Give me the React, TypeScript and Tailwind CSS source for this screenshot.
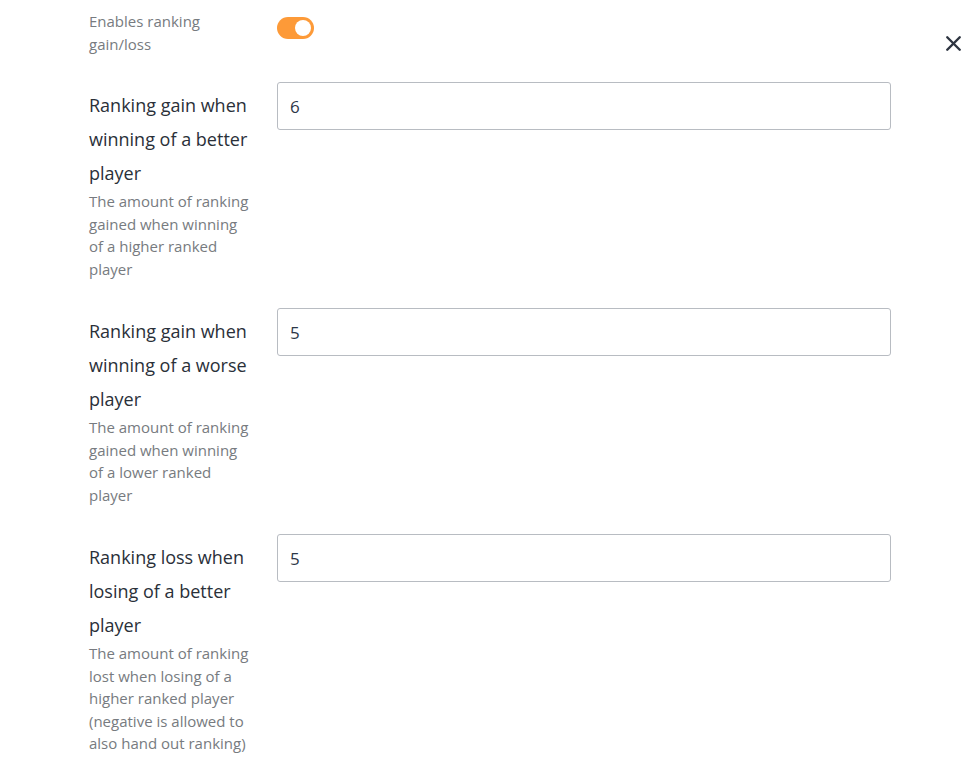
import { X } from 'lucide-react'

const rows = [
    {
        label: 'Ranking gain when winning of a better player',
        desc: 'The amount of ranking gained when winning of a higher ranked player',
        value: '6',
    },
    {
        label: 'Ranking gain when winning of a worse player',
        desc: 'The amount of ranking gained when winning of a lower ranked player',
        value: '5',
    },
    {
        label: 'Ranking loss when losing of a better player',
        desc: 'The amount of ranking lost when losing of a higher ranked player (negative is allowed to also hand out ranking)',
        value: '5',
    },
]

export default function App() {
    return (
        <div
            className="relative w-[977px] h-[770px] bg-white overflow-hidden"
            style={{ fontFamily: '"Open Sans", sans-serif' }}
        >
            <button className="absolute top-[31px] left-[941px] text-[#2d3440]">
                <X className="w-[25px] h-[25px]" strokeWidth={2.3} />
            </button>

            <div className="pl-[89px] pt-[10px] flex flex-col gap-[27px]">
                {/* toggle */}
                <div className="flex gap-[26px]">
                    <div className="w-[162px] text-[15px] leading-[22.5px] text-[#777b80]">
                        Enables ranking gain/loss
                    </div>
                    <div className="pt-[7px]">
                        <div className="w-[37px] h-[22px] rounded-full bg-[#fd9a38] flex items-center justify-end pr-[3px]">
                            <div className="w-[16px] h-[16px] rounded-full bg-white" />
                        </div>
                    </div>
                </div>

                <div className="flex flex-col gap-[28px]">
                    {rows.map((row, i) => (
                        <div key={i} className="flex gap-[26px]">
                            <div className="w-[162px] pt-[6px]">
                                <div className="text-[18px] leading-[34px] text-[#2a3039]">{row.label}</div>
                                <div className="text-[15px] leading-[22.5px] text-[#777b80]">{row.desc}</div>
                            </div>
                            <input
                                defaultValue={row.value}
                                className="w-[614px] h-[48px] self-start border border-[#b8bcc2] rounded-[3px] px-[12px] text-[17px] text-[#2d3748] outline-none"
                            />
                        </div>
                    ))}
                </div>
            </div>
        </div>
    )
}
